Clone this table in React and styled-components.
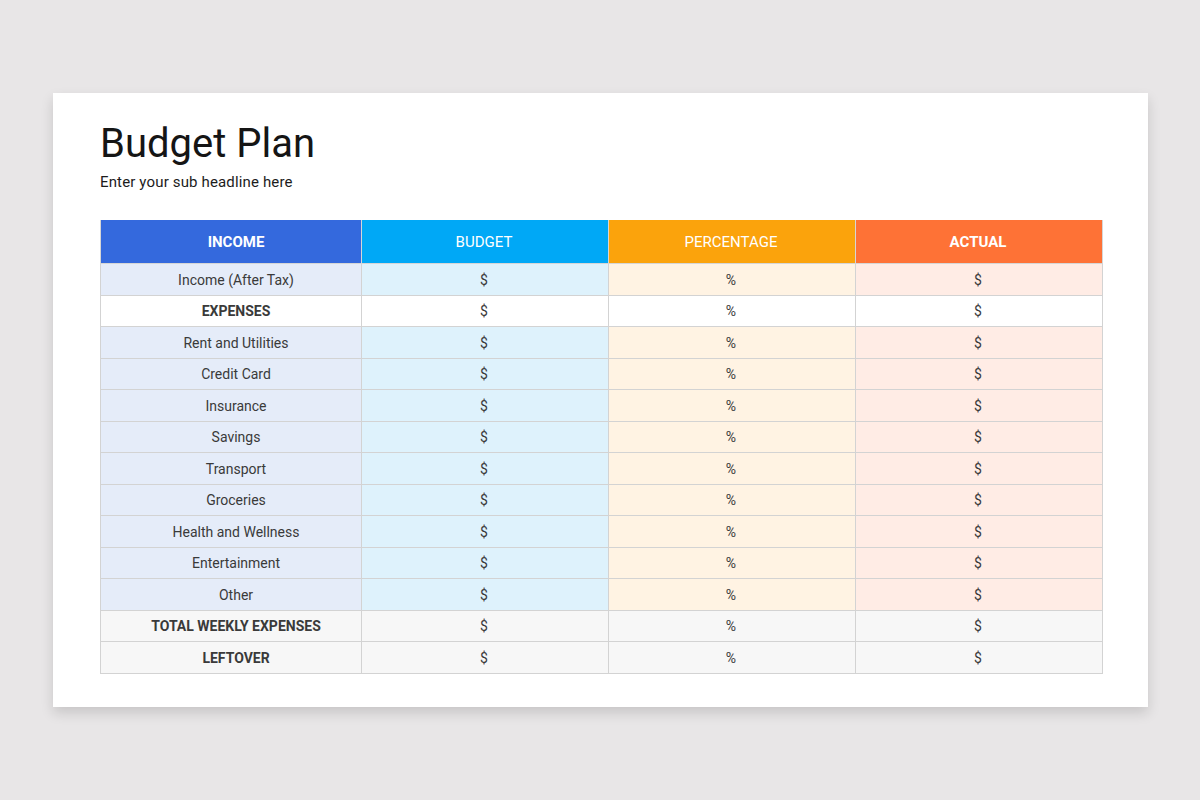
import React from "react";
import styled, { createGlobalStyle } from "styled-components";

const GlobalStyle = createGlobalStyle`
  html, body {
    margin: 0;
    padding: 0;
    background: #e8e6e7;
    font-family: Roboto, "Liberation Sans", sans-serif;
  }
`;

const Page = styled.div`
  width: 1200px;
  height: 800px;
  padding-top: 93px;
  box-sizing: border-box;
  display: flex;
  justify-content: center;
  align-items: flex-start;
`;

const Slide = styled.div`
  width: 1095px;
  height: 614px;
  margin-left: 1px;
  background: #ffffff;
  box-sizing: border-box;
  padding: 27px 46px 0 47px;
  box-shadow: 0 6px 12px rgba(0, 0, 0, 0.14);
`;

const Title = styled.h1`
  margin: 0;
  font-size: 40px;
  line-height: 48px;
  font-weight: 400;
  color: #151515;
`;

const Subtitle = styled.p`
  margin: 4px 0 0;
  font-size: 15px;
  letter-spacing: 0.15px;
  line-height: 20px;
  color: #1c1c1c;
`;

const Table = styled.table`
  margin-top: 28px;
  width: 1002px;
  border-collapse: collapse;
  table-layout: fixed;
`;

const headerColors = ["#3469dd", "#00a8f6", "#fba30c", "#fe7236"];
const bodyColors = ["#e5ecf9", "#def2fc", "#fff3e3", "#ffece5"];

const Th = styled.th`
  height: 42px;
  padding: ${(p) => (p.$col === 0 ? "1px 0 0 10px" : "1px 2px 0 0")};
  background: ${(p) => headerColors[p.$col]};
  color: #ffffff;
  font-size: 15px;
  font-weight: ${(p) => (p.$bold ? 700 : 400)};
  text-align: center;
  border: 1px solid #d6d6d6;
  border-top: none;
`;

const Td = styled.td`
  height: 29.5px;
  padding: ${(p) => (p.$col === 0 ? "1px 0 0 10px" : "1px 2px 0 0")};
  text-align: center;
  font-size: 14px;
  line-height: 16px;
  color: #3a3a3a;
  font-weight: ${(p) => (p.$bold ? 700 : 400)};
  background: ${(p) =>
    p.$variant === "plain"
      ? "#ffffff"
      : p.$variant === "total"
      ? "#f7f7f7"
      : bodyColors[p.$col]};
  border: 1px solid #d3d3d3;
`;

const rows = [
  { label: "Income (After Tax)" },
  { label: "EXPENSES", variant: "plain", bold: true },
  { label: "Rent and Utilities" },
  { label: "Credit Card" },
  { label: "Insurance" },
  { label: "Savings" },
  { label: "Transport" },
  { label: "Groceries" },
  { label: "Health and Wellness" },
  { label: "Entertainment" },
  { label: "Other" },
  { label: "TOTAL WEEKLY EXPENSES", variant: "total", bold: true },
  { label: "LEFTOVER", variant: "total", bold: true },
];

export default function App() {
  return (
    <>
      <GlobalStyle />
      <Page>
        <Slide>
          <Title>Budget Plan</Title>
          <Subtitle>Enter your sub headline here</Subtitle>
          <Table>
            <colgroup>
              <col style={{ width: 261 }} />
              <col style={{ width: 247 }} />
              <col style={{ width: 247 }} />
              <col style={{ width: 247 }} />
            </colgroup>
            <thead>
              <tr>
                <Th $col={0} $bold>INCOME</Th>
                <Th $col={1}>BUDGET</Th>
                <Th $col={2}>PERCENTAGE</Th>
                <Th $col={3} $bold>ACTUAL</Th>
              </tr>
            </thead>
            <tbody>
              {rows.map((r) => (
                <tr key={r.label}>
                  <Td $col={0} $variant={r.variant} $bold={r.bold}>
                    {r.label}
                  </Td>
                  <Td $col={1} $variant={r.variant}>$</Td>
                  <Td $col={2} $variant={r.variant}>%</Td>
                  <Td $col={3} $variant={r.variant}>$</Td>
                </tr>
              ))}
            </tbody>
          </Table>
        </Slide>
      </Page>
    </>
  );
}
